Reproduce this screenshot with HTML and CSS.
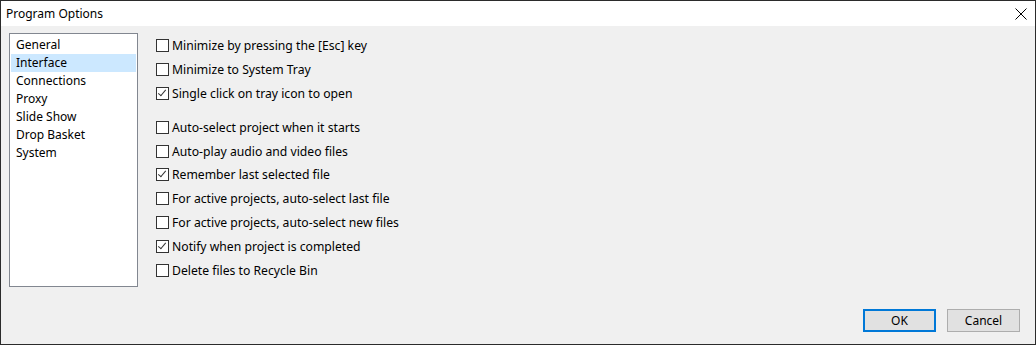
FILE: index.html
```html
<!DOCTYPE html>
<html lang="en">
<head>
    <meta charset="UTF-8">
    <title>Program Options</title>
    <link rel="stylesheet" href="styles.css">
</head>
<body>
    <div class="window">
        <div class="titlebar">
            <span class="title">Program Options</span>
            <span class="close">
                <svg width="12" height="12" viewBox="0 0 12 12">
                    <path d="M0.5 0.5 L11.5 11.5 M11.5 0.5 L0.5 11.5" stroke="#000" stroke-width="1" fill="none"/>
                </svg>
            </span>
        </div>
        <div class="content">
            <div class="main">
                <ul class="nav-list">
                    <li>General</li>
                    <li class="selected">Interface</li>
                    <li>Connections</li>
                    <li>Proxy</li>
                    <li>Slide Show</li>
                    <li>Drop Basket</li>
                    <li>System</li>
                </ul>
                <div class="options">
                    <div class="group">
                        <label class="option"><span class="box"></span>Minimize by pressing the [Esc] key</label>
                        <label class="option"><span class="box"></span>Minimize to System Tray</label>
                        <label class="option"><span class="box checked"></span>Single click on tray icon to open</label>
                    </div>
                    <div class="group">
                        <label class="option"><span class="box"></span>Auto-select project when it starts</label>
                        <label class="option"><span class="box"></span>Auto-play audio and video files</label>
                        <label class="option"><span class="box checked"></span>Remember last selected file</label>
                        <label class="option"><span class="box"></span>For active projects, auto-select last file</label>
                        <label class="option"><span class="box"></span>For active projects, auto-select new files</label>
                        <label class="option"><span class="box checked"></span>Notify when project is completed</label>
                        <label class="option"><span class="box"></span>Delete files to Recycle Bin</label>
                    </div>
                </div>
            </div>
            <div class="footer">
                <button class="btn default">OK</button>
                <button class="btn">Cancel</button>
            </div>
        </div>
    </div>
</body>
</html>
```
FILE: styles.css
```css
body {
    margin: 0;
    font-family: "Noto Sans", sans-serif;
    font-size: 12px;
    color: #000;
}
.window {
    width: 1036px;
    height: 345px;
    box-sizing: border-box;
    border: 1px solid #2b2b2b;
    background-color: #f0f0f0;
    display: flex;
    flex-direction: column;
}
.titlebar {
    height: 25px;
    background-color: #fff;
    display: flex;
    align-items: center;
    justify-content: space-between;
    padding: 0 8px 0 5px;
}
.close {
    display: flex;
}
.content {
    flex: 1;
    display: flex;
    flex-direction: column;
    padding: 7px 15px 0 8px;
}
.main {
    display: flex;
    height: 254px;
}
.nav-list {
    list-style: none;
    margin: 0;
    padding: 2px 1px 1px;
    width: 129px;
    height: 254px;
    box-sizing: border-box;
    border: 1px solid #828790;
    background-color: #fff;
}
.nav-list li {
    height: 18px;
    line-height: 18px;
    padding-left: 5px;
}
.nav-list li.selected {
    background-color: #cce8ff;
}
.options {
    margin-left: 18px;
    padding-top: 1px;
}
.group {
    margin-bottom: 10px;
}
.option {
    display: flex;
    align-items: center;
    height: 23.8px;
    font-size: 12.2px;
}
.box {
    width: 13px;
    height: 13px;
    box-sizing: border-box;
    border: 1px solid #333;
    background-color: #fff;
    margin-right: 3px;
    position: relative;
}
.box.checked::after {
    content: "";
    position: absolute;
    left: 3px;
    top: 0px;
    width: 3px;
    height: 7px;
    border-right: 1px solid #333;
    border-bottom: 1px solid #333;
    transform: rotate(40deg);
}
.footer {
    display: flex;
    justify-content: flex-end;
    gap: 11px;
    margin-top: 22px;
}
.btn {
    width: 73px;
    height: 23px;
    font-family: "Noto Sans", sans-serif;
    font-size: 12px;
    background-color: #e1e1e1;
    border: 1px solid #adadad;
    padding: 0;
}
.btn.default {
    border: 2px solid #0078d7;
}
```
